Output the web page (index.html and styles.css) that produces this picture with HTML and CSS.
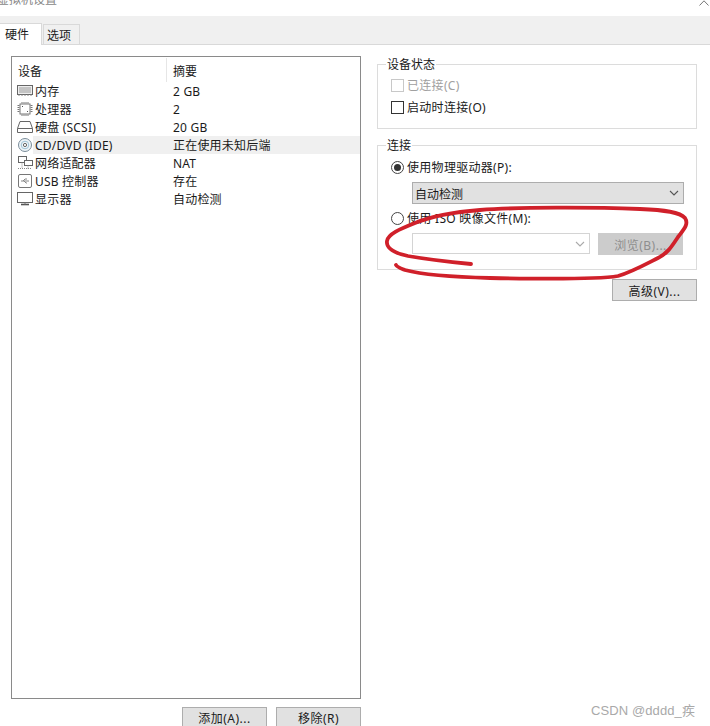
FILE: index.html
```html
<!DOCTYPE html>
<html lang="zh">
<head>
<meta charset="utf-8">
<title>虚拟机设置</title>
<link rel="stylesheet" href="styles.css">
</head>
<body>
<div class="page">
  <div class="titlebar">
    <span class="title">虚拟机设置</span>
    <svg class="close" width="11" height="6" viewBox="0 0 11 6"><path d="M0.5 5.5 L5 0.8 L9.5 5.5" fill="none" stroke="#777" stroke-width="1"/></svg>
  </div>
  <div class="tabs">
    <div class="tab active">硬件</div>
    <div class="tab">选项</div>
  </div>
  <div class="content">
    <div class="left">
      <div class="list">
        <div class="list-head"><div class="c1">设备</div><div class="c2">摘要</div></div>
        <div class="row">
          <svg class="ico" viewBox="0 0 16 14"><rect x="0.5" y="1.5" width="15" height="9" fill="#eee" stroke="#666"/><path d="M2 4h12M2 6h12M2 8h12" stroke="#9a9a9a"/><path d="M2 10.5v1.5M5 10.5v1.5M8 10.5v1.5M11 10.5v1.5M14 10.5v1.5" stroke="#888"/></svg>
          <div class="c1">内存</div><div class="c2">2 GB</div>
        </div>
        <div class="row">
          <svg class="ico" viewBox="0 0 16 14"><rect x="3" y="2" width="10" height="10" fill="#fff" stroke="#777"/><path d="M0.5 3.5h2M0.5 5.5h2M0.5 7.5h2M0.5 9.5h2M13.5 3.5h2M13.5 5.5h2M13.5 7.5h2M13.5 9.5h2M5 0v1.5M7 0v1.5M9 0v1.5M11 0v1.5M5 12.5v1.5M7 12.5v1.5M9 12.5v1.5M11 12.5v1.5" stroke="#777"/><path d="M5 4h1v1H5zM10 9h1v1h-1z" fill="#555"/></svg>
          <div class="c1">处理器</div><div class="c2">2</div>
        </div>
        <div class="row">
          <svg class="ico" viewBox="0 0 16 14"><path d="M3 1.5h10l2.5 7v4h-15v-4z" fill="#fff" stroke="#666"/><path d="M0.5 8.5h15" stroke="#666"/></svg>
          <div class="c1">硬盘 (SCSI)</div><div class="c2">20 GB</div>
        </div>
        <div class="row selected">
          <svg class="ico" viewBox="0 0 16 14"><circle cx="8" cy="7" r="6.5" fill="#eef4f8" stroke="#7a8c99"/><circle cx="8" cy="7" r="3.8" fill="none" stroke="#9fc2d6"/><circle cx="8" cy="7" r="1.6" fill="#fff" stroke="#666"/></svg>
          <div class="c1 sel">CD/DVD (IDE)</div><div class="c2">正在使用未知后端</div>
        </div>
        <div class="row">
          <svg class="ico" viewBox="0 0 16 14"><rect x="1.5" y="0.5" width="8" height="6" fill="#fff" stroke="#666"/><rect x="7.5" y="4.5" width="8" height="5" fill="#fff" stroke="#666"/><path d="M5 6.5v6M11 9.5v3M1 12.5h14" stroke="#888" stroke-dasharray="1 1"/></svg>
          <div class="c1">网络适配器</div><div class="c2">NAT</div>
        </div>
        <div class="row">
          <svg class="ico" viewBox="0 0 16 14"><rect x="1.5" y="0.5" width="13" height="13" rx="1.5" fill="#fff" stroke="#777"/><path d="M4 7h8M6 7l2-2h2M7 7l2 2h1" fill="none" stroke="#888"/></svg>
          <div class="c1">USB 控制器</div><div class="c2">存在</div>
        </div>
        <div class="row">
          <svg class="ico" viewBox="0 0 16 14"><rect x="0.5" y="0.5" width="15" height="10" fill="#fff" stroke="#666"/><path d="M4 12.5h8" stroke="#555" stroke-width="1.6"/><path d="M8 10.5v2" stroke="#777"/></svg>
          <div class="c1">显示器</div><div class="c2">自动检测</div>
        </div>
      </div>
      <div class="list-actions">
        <div class="btn btn-list">添加(A)...</div>
        <div class="btn btn-list">移除(R)</div>
      </div>
    </div>
    <div class="right">
      <fieldset class="group group-status">
        <legend>设备状态</legend>
        <label class="opt disabled"><span class="check"></span>已连接(C)</label>
        <label class="opt"><span class="check"></span>启动时连接(O)</label>
      </fieldset>
      <fieldset class="group group-conn">
        <legend>连接</legend>
        <label class="opt"><span class="radio on"></span>使用物理驱动器(P):</label>
        <div class="select">自动检测
          <svg width="10" height="6" viewBox="0 0 10 6"><path d="M1 1l4 4 4-4" fill="none" stroke="#555" stroke-width="1.1"/></svg>
        </div>
        <label class="opt opt-iso"><span class="radio"></span>使用 ISO 映像文件(M):</label>
        <div class="iso-row">
          <div class="select select-off">
            <svg width="10" height="6" viewBox="0 0 10 6"><path d="M1 1l4 4 4-4" fill="none" stroke="#aaa" stroke-width="1.1"/></svg>
          </div>
          <div class="btn btn-off">浏览(B)...</div>
        </div>
      </fieldset>
      <div class="adv-row"><div class="btn btn-adv">高级(V)...</div></div>
    </div>
  </div>
  <svg class="ink" width="710" height="726" viewBox="0 0 710 726"><path d="M471 264 C450 262 425 259 408 256 C394 253 386 248 387 241 C388 234 400 229 415 223 C432 216 455 212 480 210 C520 207 590 207 640 209 C665 210 680 212 685 218 C689 224 684 229 678 237 C672 246 668 253 658 258 C648 263 632 272 618 276 C600 279 540 279 490 278 C450 277 420 274 405 270 C400 268 397 267 396 265" fill="none" stroke="#d0202a" stroke-width="3.8" stroke-linecap="round" stroke-linejoin="round"/></svg>
  <div class="watermark">CSDN @dddd_疾</div>
</div>
</body>
</html>
```

FILE: styles.css
```css
* { box-sizing: border-box; }
html, body { margin: 0; padding: 0; background: #fff; }
body { font-family: "Noto Sans", "Noto Sans CJK SC", sans-serif; font-size: 12px; color: #1a1a1a; }
.page { position: relative; width: 710px; height: 726px; overflow: hidden; background: #fff; }

.titlebar { height: 16px; display: flex; justify-content: space-between; align-items: flex-start; overflow: hidden; }
.title { font-size: 12px; line-height: 18px; color: #888; margin: -9px 0 0 -3px; }
.close { margin-right: 0; }

.tabs { height: 29px; background: #f0f0f0; border-bottom: 1px solid #d9d9d9; display: flex; align-items: flex-end; padding-top: 8px; }
.tab { height: 20px; width: 37px; margin-left: 1px; padding-right: 5px; border: 1px solid #d9d9d9; border-bottom: 0; text-align: center; line-height: 22px; font-size: 12px; }
.tab.active { width: 42px; height: 22px; margin: 0 0 -1px; padding-right: 7px; background: #fff; border-left: 0; line-height: 22px; position: relative; }

.content { display: flex; height: 681px; }
.left { width: 350px; margin: 11px 0 0 11px; }
.list { height: 643px; border: 1px solid #8a8a8a; background: #fff; padding-top: 1px; }
.list-head { height: 24px; display: flex; align-items: flex-start; padding-left: 6px; }
.list-head .c1 { width: 149px; height: 24px; line-height: 28px; border-right: 1px solid #e6e6e6; }
.list-head .c2 { margin-left: 6px; height: 24px; line-height: 28px; }
.row { height: 18px; display: flex; align-items: center; padding-left: 5px; line-height: 20px; letter-spacing: 0.2px; }
.ico { width: 16px; height: 14px; flex: none; }
.row .c1 { width: 138px; margin-left: 2px; padding-top: 2px; white-space: nowrap; }
.row .c2 { padding-top: 2px; white-space: nowrap; }
.row.selected { background: linear-gradient(to right, #fff 21px, #f0f0f0 21px); }

.list-actions { display: flex; justify-content: flex-end; gap: 9px; margin-top: 8px; }
.btn { background: #e1e1e1; border: 1px solid #adadad; text-align: center; white-space: nowrap; letter-spacing: 0.5px; }
.btn-list { width: 85px; height: 24px; line-height: 21px; }

.right { width: 320px; margin: 0 0 0 16px; padding-top: 11px; }
.group { display: block; margin: 0; border: 1px solid #dcdcdc; padding: 0; position: relative; min-width: 0; }
.group legend { margin-left: -5px; padding: 0 1px; font-size: 12px; line-height: 16px; transform: translateY(1px); }
.group-status { height: 73px; padding: 2px 0 0 13px; }
.group-conn { height: 133px; margin-top: 8px; padding: 3px 0 0 13px; }
.opt { display: flex; align-items: center; height: 22px; white-space: nowrap; letter-spacing: 0.3px; }
.opt.disabled { color: #a0a0a0; }
.check { width: 13px; height: 13px; border: 1px solid #333; background: #fff; margin-right: 3px; flex: none; }
.disabled .check { border-color: #c8c8c8; }
.radio { width: 13px; height: 13px; border: 1px solid #444; border-radius: 50%; background: #fff; margin-right: 3px; flex: none; display: flex; align-items: center; justify-content: center; }
.radio.on::after { content: ""; width: 7px; height: 7px; border-radius: 50%; background: #333; }
.group-conn .opt:first-of-type { height: 20px; margin-top: 1px; }
.select { display: flex; align-items: center; justify-content: space-between; width: 272px; height: 22px; margin: 5px 0 0 21px; padding: 2px 4px 0 2px; background: #e1e1e1; border: 1px solid #adadad; }
.select svg { margin-top: -2px; }
.opt-iso { height: 20px; margin-top: 4px; }
.iso-row { display: flex; align-items: flex-start; margin: 5px 0 0 21px; }
.select-off { width: 178px; height: 21px; margin: 0; background: #fff; border-color: #d4d4d4; justify-content: flex-end; }
.btn-off { width: 85px; height: 22px; margin-left: 8px; line-height: 23px; background: #cccccc; border-color: #cccccc; color: #8e8e8e; }
.adv-row { display: flex; justify-content: flex-end; margin-top: 9px; }
.btn-adv { width: 85px; height: 22px; line-height: 23px; }

.ink { position: absolute; left: 0; top: 0; pointer-events: none; }
.watermark { position: absolute; right: 15px; top: 702px; font-size: 13px; line-height: 18px; color: #a9a9a9; letter-spacing: 0.1px; font-family: "Liberation Sans", "Noto Sans CJK SC", sans-serif; }
```
